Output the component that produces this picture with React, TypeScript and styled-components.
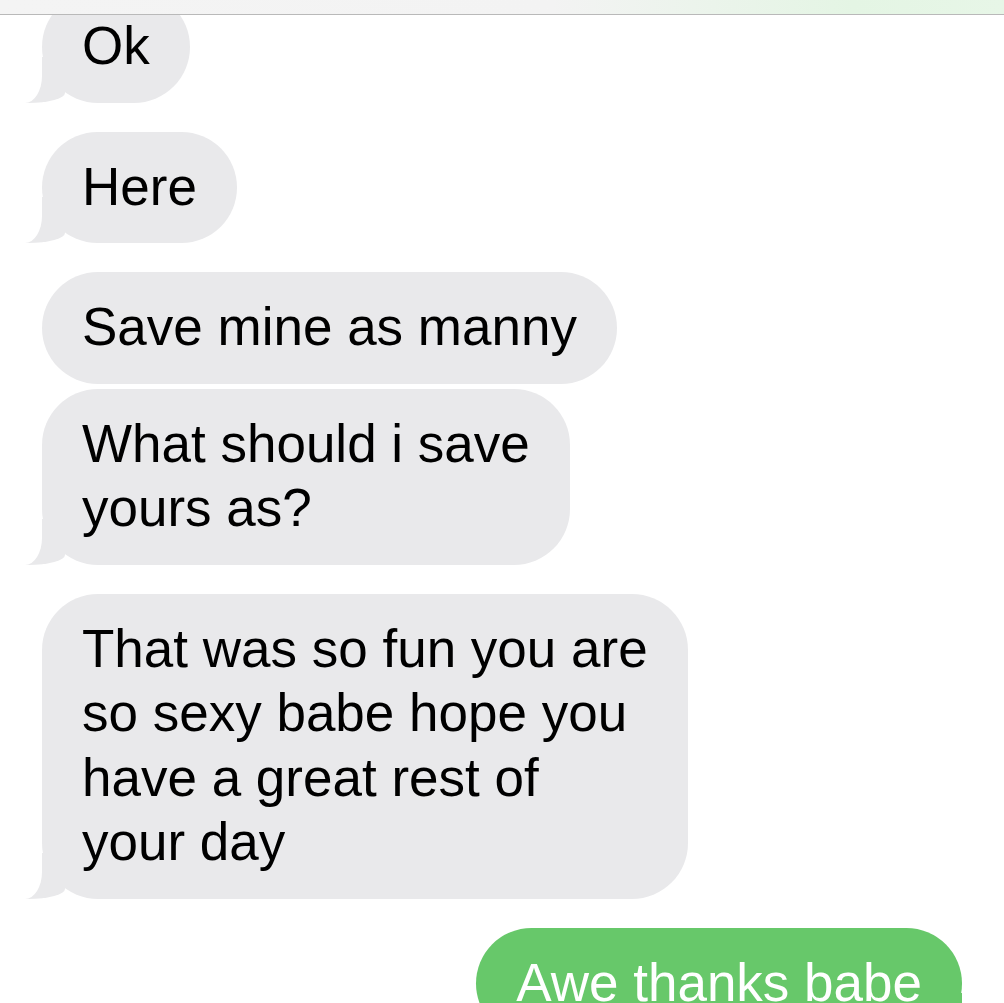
import React from "react";
import styled, { createGlobalStyle, css } from "styled-components";

const GlobalStyle = createGlobalStyle`
    html, body {
        margin: 0;
        padding: 0;
        background: #fff;
    }
    body {
        width: 1004px;
        height: 1003px;
        overflow: hidden;
        font-family: "Liberation Sans", Arial, sans-serif;
    }
`

const Screen = styled.div`
    display: flex;
    flex-direction: column;
    width: 1004px;
    height: 1003px;
    overflow: hidden;
    background: #fff;
`

const TopBar = styled.header`
    position: relative;
    z-index: 2;
    flex: none;
    height: 14px;
    background: linear-gradient(90deg, #f4f4f4 0%, #f3f3f3 55%, #e4f5e4 85%, #e7f6e7 100%);
    border-bottom: 1px solid #b9b9b9;
`

const Thread = styled.main`
    display: flex;
    flex-direction: column;
    margin-top: -24px;
    padding: 0 42px;
`

const Row = styled.div<{ $mine?: boolean; $grouped?: boolean }>`
    display: flex;
    justify-content: ${p => (p.$mine ? "flex-end" : "flex-start")};
    margin-top: ${p => (p.$grouped ? "5px" : "29px")};
    &:first-child {
        margin-top: 0;
    }
`

const grey = "#e9e9eb";
const green = "#67c86a";

const Bubble = styled.div<{ $mine?: boolean; $tail?: boolean }>`
    position: relative;
    isolation: isolate;
    padding: 23px 40px 24px 40px;
    border-radius: 56px;
    background: ${p => (p.$mine ? green : grey)};
    color: ${p => (p.$mine ? "#fff" : "#000")};
    font-size: 53px;
    line-height: 64.5px;
    white-space: nowrap;

    ${p => p.$tail && !p.$mine && css`
        &::before {
            content: "";
            position: absolute;
            z-index: -1;
            bottom: 0;
            left: -17px;
            width: 40px;
            height: 46px;
            background: ${grey};
            border-bottom-right-radius: 37px 10px;
        }
        &::after {
            content: "";
            position: absolute;
            z-index: -1;
            bottom: 0;
            left: -60px;
            width: 60px;
            height: 48px;
            background: #fff;
            border-bottom-right-radius: 17px 27px;
        }
    `}

    ${p => p.$tail && p.$mine && css`
        &::before {
            content: "";
            position: absolute;
            z-index: -1;
            bottom: 0;
            right: -17px;
            width: 40px;
            height: 46px;
            background: ${green};
            border-bottom-left-radius: 37px 10px;
        }
        &::after {
            content: "";
            position: absolute;
            z-index: -1;
            bottom: 0;
            right: -60px;
            width: 60px;
            height: 48px;
            background: #fff;
            border-bottom-left-radius: 17px 27px;
        }
    `}
`

type Message = {
    lines: string[];
    mine?: boolean;
    grouped?: boolean;
    tail?: boolean;
};

const messages: Message[] = [
    { lines: ["Ok"], tail: true },
    { lines: ["Here"], tail: true },
    { lines: ["Save mine as manny"] },
    { lines: ["What should i save", "yours as?"], grouped: true, tail: true },
    { lines: ["That was so fun you are", "so sexy babe hope you", "have a great rest of", "your day"], tail: true },
    { lines: ["Awe thanks babe"], mine: true, tail: true },
];

const App = () => {
    return (
        <Screen>
            <GlobalStyle />
            <TopBar />
            <Thread>
                {messages.map((m, i) => (
                    <Row key={i} $mine={m.mine} $grouped={m.grouped}>
                        <Bubble $mine={m.mine} $tail={m.tail}>
                            {m.lines.map((line, j) => (
                                <React.Fragment key={j}>
                                    {j > 0 && <br />}
                                    {line}
                                </React.Fragment>
                            ))}
                        </Bubble>
                    </Row>
                ))}
            </Thread>
        </Screen>
    )
}

export default App;
